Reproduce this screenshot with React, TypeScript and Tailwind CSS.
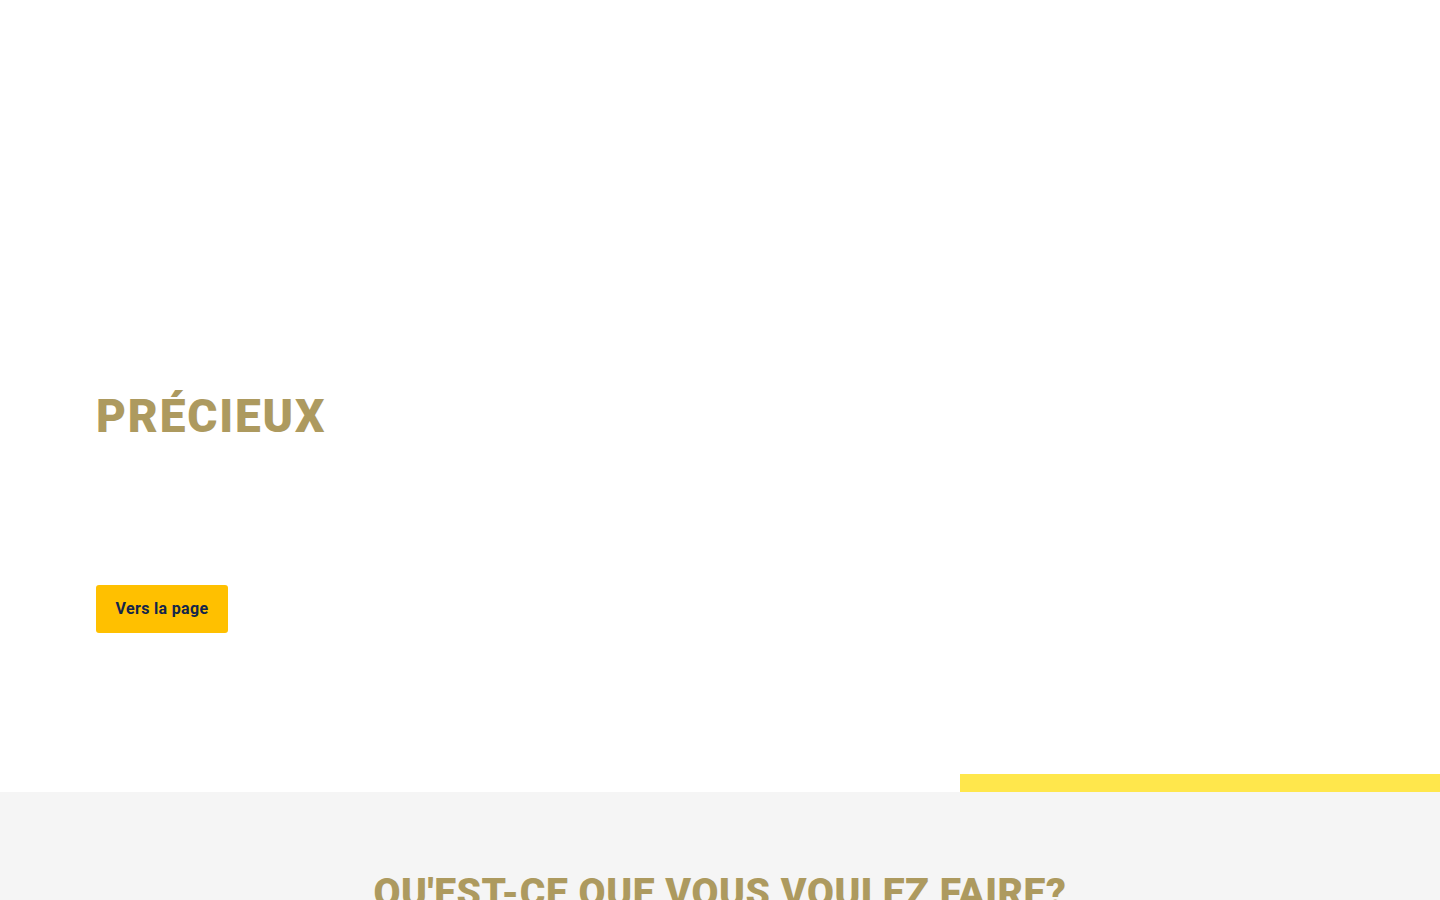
export default function App() {
  return (
    <div className="w-full min-h-screen bg-white" style={{ fontFamily: 'Roboto, "Noto Sans", sans-serif' }}>
      {/* Hero */}
      <section className="relative h-[792px] bg-white">
        <div className="flex flex-col px-24 pt-[392px]">
          <h1 className="text-[46px] leading-[48px] font-black text-[#ad9a5f] tracking-[0.04em]">PRÉCIEUX</h1>
          <div className="mt-[145px]">
            <button className="h-12 w-[132px] rounded-[3px] bg-[#ffc000] text-[16px] font-bold text-[#13254b] tracking-[0.02em]">
              Vers la page
            </button>
          </div>
        </div>
        <div className="absolute bottom-0 right-0 h-[18px] w-[480px] bg-[#ffe74c]" />
      </section>

      {/* Actions */}
      <section className="bg-[#f5f5f5] pt-[77px] pb-20">
        <h2 className="text-center text-[39px] leading-[48px] font-black text-[#ad9a5f] tracking-[0.015em]">
          QU'EST-CE QUE VOUS VOULEZ FAIRE?
        </h2>
      </section>
    </div>
  );
}
